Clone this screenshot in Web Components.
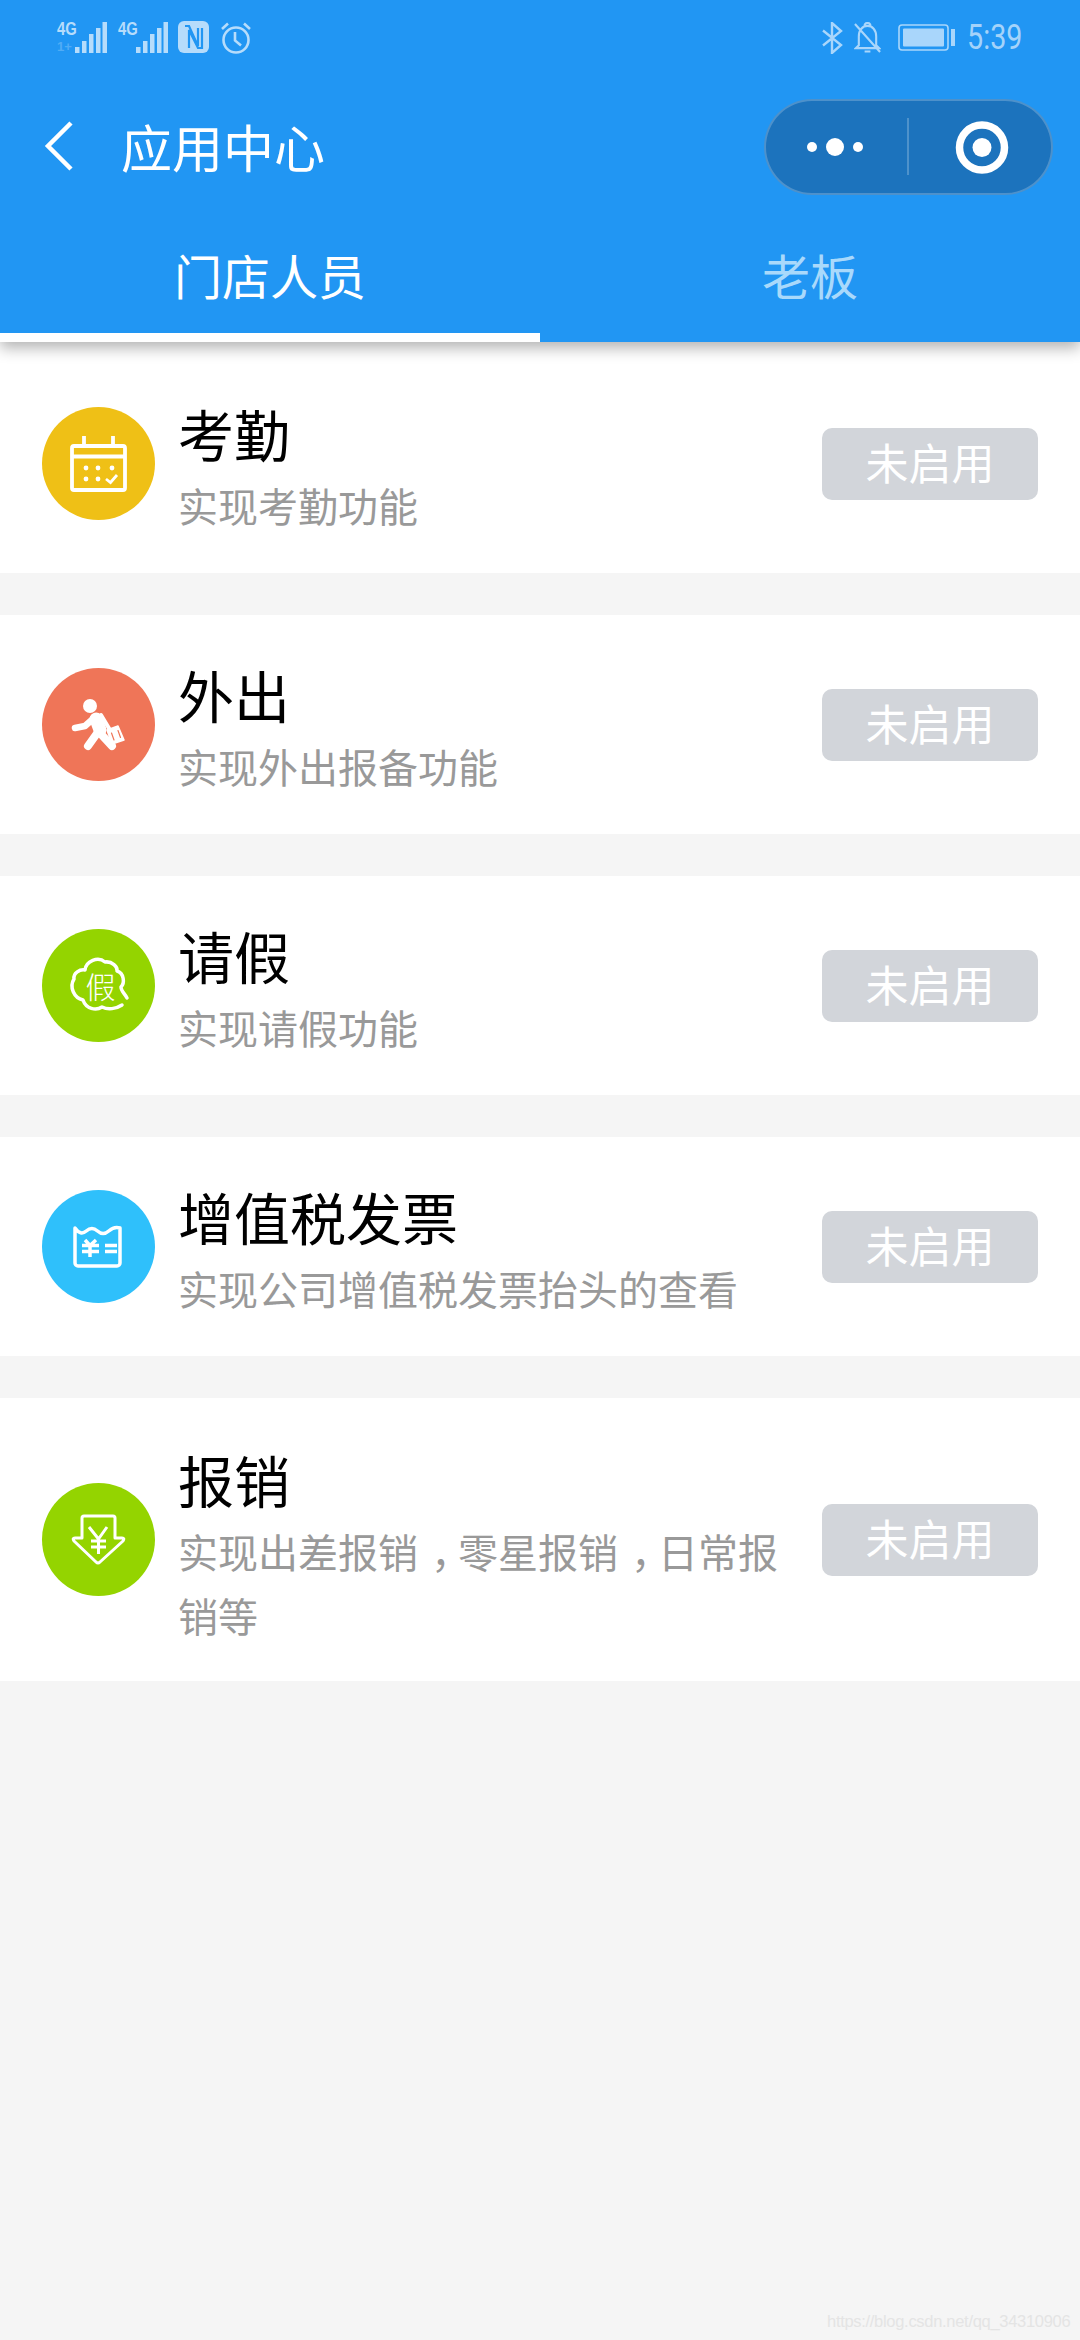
<!DOCTYPE html>
<html lang="zh"><head><meta charset="utf-8">
<style>
html,body{margin:0;padding:0;background:#f5f5f5;width:1080px;height:2340px;overflow:hidden}
body{font-family:"Noto Sans CJK SC","Noto Sans",sans-serif;position:relative}
</style></head><body>
<app-header></app-header>
<app-list>
<app-row first title="考勤" sub="实现考勤功能" color="#efc016" icon="cal"></app-row>
<app-row title="外出" sub="实现外出报备功能" color="#ef7558" icon="walk"></app-row>
<app-row title="请假" sub="实现请假功能" color="#94d400" icon="leave"></app-row>
<app-row title="增值税发票" sub="实现公司增值税发票抬头的查看" color="#2fc0fb" icon="inv"></app-row>
<app-row tall title="报销" sub="实现出差报销，零星报销，日常报销等" color="#94d400" icon="ret"></app-row>
</app-list>
<water-mark>https://blog.csdn.net/qq_34310906</water-mark>
<script>
const ICONS={
cal:`<svg viewBox="0 0 113 113" width="113" height="113" fill="none" stroke="#fff" stroke-width="3.800"><rect x="30" y="39" width="53" height="44" rx="2"/><path d="M30 49.500H83M42 29V39M71 29V39"/><g fill="#fff" stroke="none"><circle cx="44" cy="61" r="2.400"/><circle cx="56" cy="61" r="2.400"/><circle cx="70" cy="61" r="2.400"/><circle cx="44" cy="72" r="2.400"/><circle cx="56" cy="72" r="2.400"/></g><path d="M64 72l4.500 3.500 6.500-7.500" stroke-width="2.800"/></svg>`,
walk:`<svg viewBox="0 0 113 113" width="113" height="113" fill="none" stroke="#fff" stroke-linecap="round" stroke-linejoin="round"><circle cx="48" cy="38" r="7" fill="#fff" stroke="none"/><path d="M33 60L43 58L52 50" stroke-width="6.500"/><path d="M54 51L58 62" stroke-width="13"/><path d="M56 64L46 78" stroke-width="8"/><path d="M58 65L70 78" stroke-width="8"/><path d="M59 47L68 62" stroke-width="4"/><path d="M65 62L76 58L82 72L70 76Z" fill="#fff" stroke-width="1.500"/><path d="M69.500 65L72 72M76 62.500L78.500 69.500" stroke="#ef7558" stroke-width="1.200"/></svg>`,
leave:`<svg viewBox="0 0 113 113" width="113" height="113" fill="none" stroke="#fff" stroke-width="3.500" stroke-linecap="round" stroke-linejoin="round"><path d="M80 76C74 80 66 81 60 78C54 82 44 80 41 71C32 69 27 58 32 50C31 44 38 40 43 41C44 32 56 27 63 33C70 32 76 38 75 42C82 44 83 54 79 58C79 62 83 65 85 69"/></svg>`,
inv:`<svg viewBox="0 0 113 113" width="113" height="113" fill="none" stroke="#fff" stroke-width="3.500" stroke-linejoin="round"><path d="M33 38Q38.600 46 44.250 41T55.500 41T66.750 41T78 38V73a3 3 0 0 1-3 3H36a3 3 0 0 1-3-3Z"/><path d="M43 50L48 55.500L54 50M40 55.500H57M40 61.500H57M48 55.500V67M63 55.500H75M63 61.500H75"/></svg>`,
ret:`<svg viewBox="0 0 113 113" width="113" height="113" fill="none" stroke="#fff" stroke-width="3" stroke-linejoin="round"><path d="M40 35Q40 33 42 33H71Q73 33 73 35V55H80Q83 55 81 58L58 79Q56 81 54 79L32 58Q30 55 33 55H40Z"/><path d="M47 44L56.500 56L65 44M49 58H64M49 64H64M56.500 56V71"/></svg>`
};
function def(n,html,init){customElements.define(n,class extends HTMLElement{constructor(){super();const s=this.attachShadow({mode:'open'});s.innerHTML=html;init&&init.call(this,s)}})}
const BARS=`<svg width="33" height="31" viewBox="0 0 33 31" fill="#b6dcfb"><rect x="1" y="25" width="4.500" height="6"/><rect x="8" y="19" width="4.500" height="12"/><rect x="15" y="12" width="4.500" height="19"/><rect x="22" y="6" width="4.500" height="25"/><rect x="28.500" y="0" width="4.500" height="31"/></svg>`;
def('status-bar',`<style>
:host{display:flex;height:72px;box-sizing:border-box;padding:22px 58px 0 57px;justify-content:space-between;color:#a9d6fb}
.g{display:flex;align-items:flex-start;height:36px}
.sig{position:relative;width:50px;height:31px;margin-right:11px}
.sig b{position:absolute;left:0;top:-2px;font:700 19px/18px "Liberation Sans",sans-serif;transform:scaleX(.78);transform-origin:0 0;color:#b6dcfb}
.sig i{position:absolute;left:0;top:18px;font:700 13px/14px "Liberation Sans",sans-serif;opacity:.35;font-style:normal}
.sig svg{position:absolute;right:0;top:0}
.t{font:400 35px/40px Roboto,sans-serif;transform:scaleX(.82);transform-origin:100% 0;width:67px;text-align:right;white-space:nowrap;margin-top:-4px;color:#a4d3fa}
</style>
<div class="g">
<div class="sig"><b>4G</b><i>1+</i>${BARS}</div>
<div class="sig" style="margin-right:10px"><b>4G</b>${BARS}</div>
<svg width="31" height="32" viewBox="0 0 31 32" style="margin:-1px 11px 0 0"><rect x="0" y="0" width="31" height="32" rx="6" fill="#b6dcfb"/><path d="M7 5H11L20 25V7M24 7V27H20L11 9V27" fill="none" stroke="#2196f3" stroke-width="2.200"/></svg>
<svg width="32" height="32" viewBox="0 0 32 32" fill="none" stroke="#b6dcfb" stroke-width="2.600"><circle cx="16" cy="18" r="12.500"/><path d="M15 10V18.500L21 23.500M2 7L8 1.500M30 7L24 1.500"/></svg>
</div>
<div class="g">
<svg width="22" height="32" viewBox="0 0 22 32" fill="none" stroke="#a9d6fb" stroke-width="2.400"><path d="M2 8.500L20 23L11 31V1L20 9L2 23.500"/></svg>
<svg width="27" height="31" viewBox="0 0 28 32" fill="none" stroke="#a9d6fb" stroke-width="2.200" style="margin-left:11px"><path d="M5 24V15C5 8 9 4 14 4S23 8 23 15V24L26 27H2ZM11 30.500H17M11 4a3 3 0 0 1 6 0M1 2L27 31"/></svg>
<svg width="57" height="28" viewBox="0 0 57 28" style="margin:2px 0 0 17px"><rect x="1" y="1" width="49" height="25" rx="3" fill="none" stroke="#a9d6fb" stroke-width="1.600"/><rect x="5" y="4.500" width="41" height="18" rx="1" fill="#a9d6fb"/><rect x="53" y="5" width="4" height="17" fill="#a9d6fb"/></svg>
<div class="t">5:39</div>
</div>`);
def('mini-capsule',`<style>
:host{display:block;width:289px;height:96px;box-sizing:border-box;border:2px solid rgba(255,255,255,.22);border-radius:48px;background:#1c73bd}
svg{display:block;margin:-2px}
</style><svg width="289" height="96" viewBox="764 99 289 96"><g fill="#fff"><circle cx="812" cy="147" r="5"/><circle cx="835" cy="147" r="9"/><circle cx="858" cy="147" r="5"/><circle cx="982" cy="147.500" r="9.500"/></g><path d="M908 118V175" stroke="#fff" stroke-opacity=".3" stroke-width="1.500"/><circle cx="982" cy="147.500" r="22.500" fill="none" stroke="#fff" stroke-width="7.500"/></svg>`);
def('app-header',`<style>
:host{display:block;position:relative;z-index:2;background:#2196f3;height:342px;box-shadow:0 6px 14px rgba(0,0,0,.3)}
.nav{display:flex;align-items:center;height:150px;padding:0 27px 0 43px;color:#fff;box-sizing:border-box}
.back{width:32px;height:54px;flex:none}
.ttl{font-size:51px;line-height:60px;margin-left:46px;flex:1;margin-top:-3px}
.tabs{display:flex;height:120px}
.tab{flex:1;display:flex;justify-content:center;align-items:flex-start;font-size:48px;line-height:60px;padding-top:22px;box-sizing:border-box;color:#a9d9fb}
.tab.on{color:#fff;border-bottom:9px solid #fff}
</style>
<status-bar></status-bar>
<div class="nav"><svg class="back" viewBox="0 0 32 54" fill="none" stroke="#fff" stroke-width="4.500"><path d="M28 3L5 26L28 49"/></svg><div class="ttl">应用中心</div><mini-capsule></mini-capsule></div>
<div class="tabs"><div class="tab on">门店人员</div><div class="tab">老板</div></div>`);
def('app-list',`<style>:host{display:flex;flex-direction:column;gap:42px}</style><slot></slot>`);
customElements.define('app-row',class extends HTMLElement{
 constructor(){super();this.attachShadow({mode:'open'})}
 connectedCallback(){const a=n=>this.getAttribute(n);
 const sub=a('sub').replace(/，/g,'<span class="c">，</span>');
 this.shadowRoot.innerHTML=`<style>
 :host{display:flex;background:#fff;height:219px;box-sizing:border-box;padding:0 42px;align-items:center}
 :host([first]){height:231px;padding-top:12px}
 :host([tall]){height:283px}
 :host([tall]) .tx{margin-top:14px}
 .ic{width:113px;height:113px;border-radius:50%;flex:none;position:relative}
 .ic svg{display:block}
 .ic span{position:absolute;left:4px;right:0;top:36px;text-align:center;font-size:30px;line-height:40px;color:#fff;font-weight:300}
 .tx{flex:1;margin-left:23px;min-width:0;margin-top:10px}
 .t{font-size:56px;line-height:64px;color:#000}
 .s{font-size:40px;line-height:64px;color:#999;width:610px;margin-top:8px}
 .c{display:inline-block;width:40px;transform:translateX(13px)}
 .b{flex:none;width:216px;height:72px;background:#d2d5da;border-radius:10px;color:#fff;display:flex;align-items:center;justify-content:center;font-size:43px;line-height:66px;padding-bottom:6px;box-sizing:border-box}
 </style><div class="ic" style="background:${a('color')}">${ICONS[a('icon')]}${a('icon')==='leave'?'<span>假</span>':''}</div>
 <div class="tx"><div class="t">${a('title')}</div><div class="s">${sub}</div></div><div class="b">未启用</div>`}
});
def('water-mark',`<style>:host{position:absolute;left:827px;top:2311px;font:16.500px/20px "Liberation Sans",sans-serif;letter-spacing:-.3px;color:#e4e4e4;white-space:nowrap}</style><slot></slot>`);
</script>
</body></html>
